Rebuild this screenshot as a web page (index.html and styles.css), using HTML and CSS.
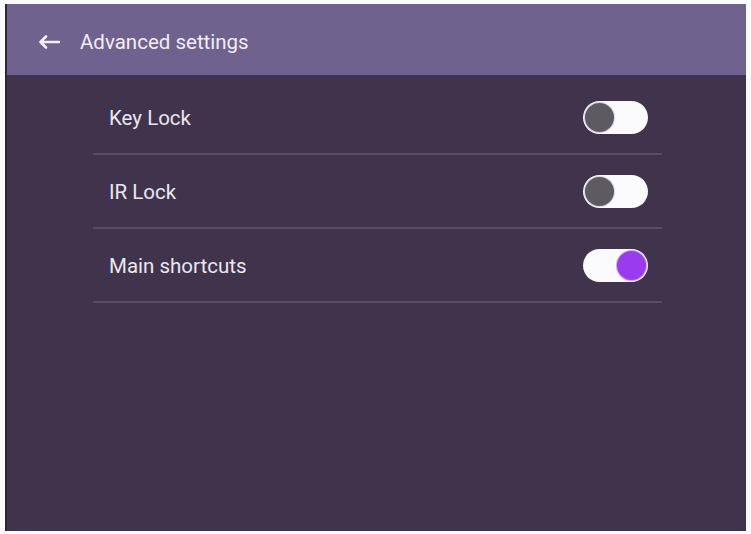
FILE: index.html
```html
<!DOCTYPE html>
<html lang="en">
<head>
  <meta charset="UTF-8">
  <title>Advanced settings</title>
  <link rel="stylesheet" href="styles.css">
</head>
<body>
  <div class="screen">
    <div class="header">
      <svg class="back" width="22" height="14" viewBox="0 0 22 14">
        <path d="M21 7H2.5M8 1.5L2.5 7L8 12.5" fill="none" stroke="#f4f0f8" stroke-width="2.6" stroke-linecap="round" stroke-linejoin="round"/>
      </svg>
      <span class="title">Advanced settings</span>
    </div>
    <div class="list">
      <div class="row">
        <span class="label">Key Lock</span>
        <div class="toggle"><div class="knob"></div></div>
      </div>
      <div class="row">
        <span class="label">IR Lock</span>
        <div class="toggle"><div class="knob"></div></div>
      </div>
      <div class="row">
        <span class="label">Main shortcuts</span>
        <div class="toggle on"><div class="knob"></div></div>
      </div>
    </div>
  </div>
</body>
</html>
```

FILE: styles.css
```css
body {
  margin: 0;
  padding: 4px 5px 3px 5px;
  background-color: #fbfbfd;
  font-family: Roboto, "Noto Sans", sans-serif;
}

.screen {
  width: 739px;
  height: 527px;
  background-color: #3f344c;
  border-left: 2px solid #2c2634;
  box-sizing: content-box;
}

.header {
  height: 71px;
  background-color: #6f628f;
  display: flex;
  align-items: center;
  padding-left: 31px;
  gap: 20px;
  padding-top: 4px;
  box-sizing: border-box;
}

.back {
  display: block;
}

.title {
  color: #f1edf6;
  font-size: 20.5px;
}

.list {
  margin-left: 86px;
  width: 569px;
  padding-top: 6px;
}

.row {
  height: 72px;
  display: flex;
  align-items: center;
  justify-content: space-between;
  padding: 0 14px 0 16px;
  border-bottom: 2px solid #574c67;
}

.label {
  color: #ebe7f0;
  font-size: 20.5px;
  margin-top: 1px;
}

.toggle {
  width: 65px;
  height: 33px;
  border-radius: 17px;
  background-color: #fbfafd;
  display: flex;
  align-items: center;
  padding: 0 2px;
  box-sizing: border-box;
  margin-top: 0;
}

.knob {
  width: 29px;
  height: 29px;
  border-radius: 50%;
  background-color: #5e5a62;
  box-shadow: 0 0 0 1px #d8d4dc;
}

.toggle.on {
  justify-content: flex-end;
}

.toggle.on .knob {
  background-color: #9a3bf0;
  box-shadow: 0 0 0 1px #c9a6f2;
}
```
